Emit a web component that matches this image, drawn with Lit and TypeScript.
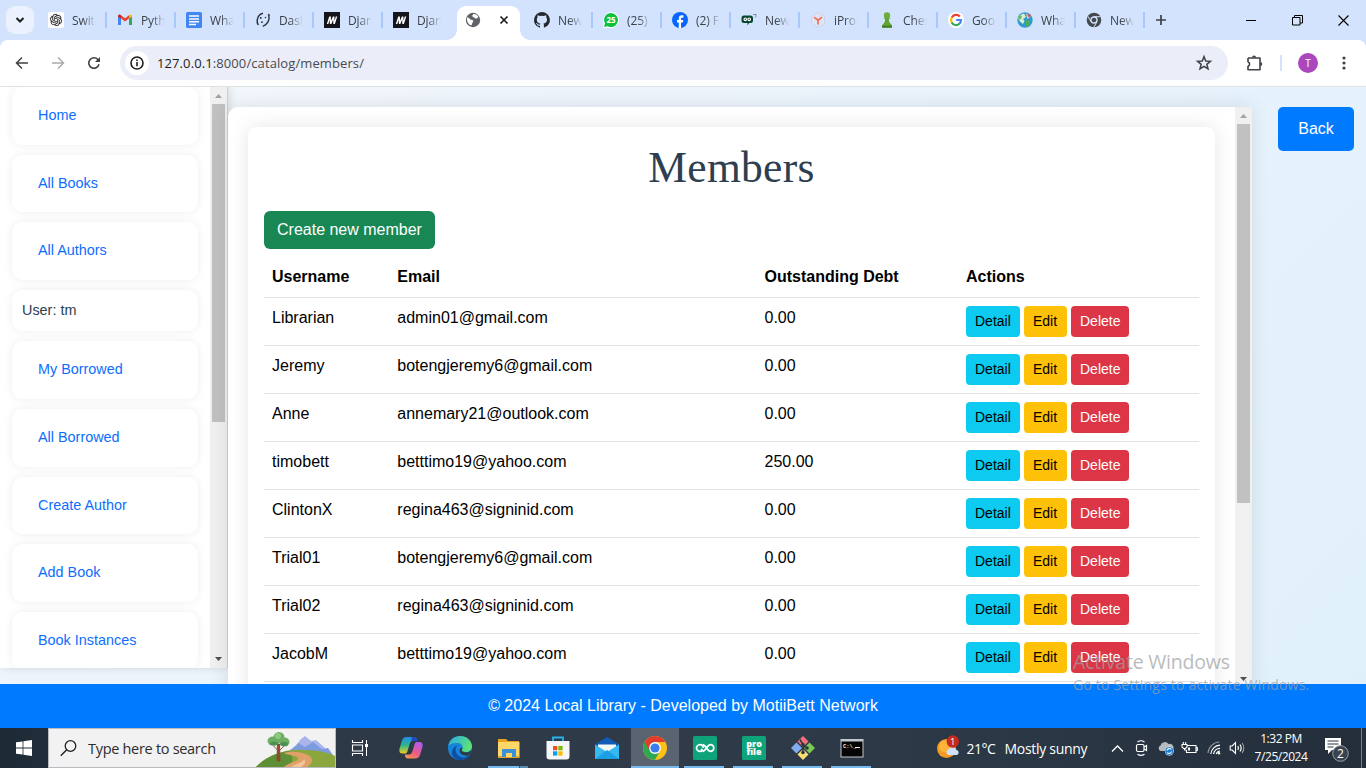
import { LitElement, html, css, svg } from "lit";
import { customElement } from "lit/decorators.js";

const icon = (w: number, h: number, body: unknown, vb = `0 0 ${w} ${h}`) =>
  html`<svg width=${w} height=${h} viewBox=${vb} fill="none">${body}</svg>`;

/* ---------- tab favicons, 16x16 ---------- */
const fav: Record<string, unknown> = {
  gpt: svg`<rect width="16" height="16" rx="2" fill="#fff"/>
    <path transform="translate(2 2) scale(.5)" fill="#222" stroke="#222" stroke-width=".3" d="M22.2819 9.8211a5.9847 5.9847 0 0 0-.5157-4.9108 6.0462 6.0462 0 0 0-6.5098-2.9A6.0651 6.0651 0 0 0 4.9807 4.1818a5.9847 5.9847 0 0 0-3.9977 2.9 6.0462 6.0462 0 0 0 .7427 7.0966 5.98 5.98 0 0 0 .511 4.9107 6.051 6.051 0 0 0 6.5146 2.9001A5.9847 5.9847 0 0 0 13.2599 24a6.0557 6.0557 0 0 0 5.7718-4.2058 5.9894 5.9894 0 0 0 3.9977-2.9001 6.0557 6.0557 0 0 0-.7475-7.0729zm-9.022 12.6081a4.4755 4.4755 0 0 1-2.8764-1.0408l.1419-.0804 4.7783-2.7582a.7948.7948 0 0 0 .3927-.6813v-6.7369l2.02 1.1686a.071.071 0 0 1 .038.052v5.5826a4.504 4.504 0 0 1-4.4945 4.4944zm-9.6607-4.1254a4.4708 4.4708 0 0 1-.5346-3.0137l.142.0852 4.783 2.7582a.7712.7712 0 0 0 .7806 0l5.8428-3.3685v2.3324a.0804.0804 0 0 1-.0332.0615L9.74 19.9502a4.4992 4.4992 0 0 1-6.1408-1.6464zM2.3408 7.8956a4.485 4.485 0 0 1 2.3655-1.9728V11.6a.7664.7664 0 0 0 .3879.6765l5.8144 3.3543-2.0201 1.1685a.0757.0757 0 0 1-.071 0l-4.8303-2.7865A4.504 4.504 0 0 1 2.3408 7.872zm16.5963 3.8558L13.1038 8.364 15.1192 7.2a.0757.0757 0 0 1 .071 0l4.8303 2.7913a4.4944 4.4944 0 0 1-.6765 8.1042v-5.6772a.79.79 0 0 0-.407-.667zm2.0107-3.0231l-.142-.0852-4.7735-2.7818a.7759.7759 0 0 0-.7854 0L9.409 9.2297V6.8974a.0662.0662 0 0 1 .0284-.0615l4.8303-2.7866a4.4992 4.4992 0 0 1 6.6802 4.66zM8.3065 12.863l-2.02-1.1638a.0804.0804 0 0 1-.038-.0567V6.0742a4.4992 4.4992 0 0 1 7.3757-3.4537l-.142.0805L8.704 5.459a.7948.7948 0 0 0-.3927.6813zm1.0976-2.3654l2.602-1.4998 2.6069 1.4998v2.9994l-2.5974 1.4997-2.6067-1.4997Z"/>`,
  gmail: svg`<path d="M1 13V4l3 2.300V13z" fill="#4285f4"/><path d="M15 13V4l-3 2.300V13z" fill="#34a853"/>
    <path d="M4 6.400V3.300l4 3 4-3v3.200L8 9.600z" fill="#ea4335"/><path d="M1 4.200c0-1.700 1.700-2.200 3-1v3.400L1 4.800z" fill="#c5221f"/>
    <path d="M15 4.200c0-1.700-1.700-2.200-3-1v3.400l3-1.800z" fill="#fbbc04"/>`,
  docs: svg`<rect width="16" height="16" rx="1.500" fill="#4285f4"/><path d="M3 4h10M3 7h10M3 9.800h10M3 12.500h7" stroke="#fff" stroke-width="1.600"/>`,
  dash: svg`<path d="M8 1.200C4 2 1.200 6 2.500 11.500M13.800 3c1.200 5-1.300 9.500-6 11.300" stroke="#2b2f36" stroke-width="1.400"/>
    <path d="M1.500 10.500l1.200 3 1.600-1.500M15 4l-1-2.500-1.500 1.500" fill="#2b2f36"/><circle cx="5.800" cy="6" r=".9" fill="#2b2f36"/><circle cx="10.500" cy="5.500" r=".8" fill="#2b2f36"/><circle cx="7" cy="10.200" r=".9" fill="#2b2f36"/>`,
  mdn: svg`<rect width="16" height="16" fill="#15141a"/><path d="M2.800 12L5.200 4.500h1.700L7 8.800l1.900-4.300h1.500l.1 4.300 1.300-4.300h1.500L10.900 12H9.300L9.200 7.700 7.300 12H5.900L5.700 7.700 4.300 12z" fill="#fff"/>`,
  globe: svg`<circle cx="8" cy="8" r="7.200" fill="#5f6368"/><path d="M2.200 5.200C4 5.500 4.600 7.600 7 8c1.500.3 1.800 1.400.8 2.300-1 .9-.5 2.500-1.400 3C3.500 12.800 1.200 9 2.200 5.200zM8.500 2c2-.2 4 .8 4.900 3-1.300.4-1.200 1.800-2.700 1.600C9.400 6.400 8.800 5 7.500 4.600c-.8-.6.2-1.800 1-2.600z" fill="#fff"/>`,
  github: svg`<path fill="#24292f" d="M8 0a8 8 0 0 0-2.500 15.600c.4 0 .5-.2.5-.4v-1.500c-2 .5-2.600-.5-2.800-1-.1-.2-.5-1-.9-1.200-.3-.1-.7-.5 0-.5s1.100.6 1.300.8c.7 1.200 1.900.9 2.400.7 0-.5.300-.9.500-1.100-1.800-.2-3.700-.9-3.700-4 0-.9.300-1.600.8-2.100 0-.2-.3-1 .1-2.100 0 0 .7-.2 2.200.8a7.500 7.500 0 0 1 4 0c1.500-1 2.200-.8 2.200-.8.4 1.100.1 1.900.1 2.100.5.600.8 1.300.8 2.100 0 3.100-1.900 3.800-3.700 4 .300.200.6.700.6 1.500v2.300c0 .2.100.5.500.4A8 8 0 0 0 8 0z"/>`,
  wa: svg`<path d="M8 0a8 8 0 0 1 0 16H1l-1 .5.500-2.500V8A8 8 0 0 1 8 0z" fill="#fff"/><path d="M8 1a7 7 0 1 1-3.300 13.200L1 15l1-3.500A7 7 0 0 1 8 1z" fill="#0fc03f"/>
    <text x="8" y="11" text-anchor="middle" font-family="Open Sans" font-weight="700" font-size="8" fill="#fff">25</text>`,
  fb: svg`<circle cx="8" cy="8" r="8" fill="#0866ff"/><path d="M6.800 16v-5.500H5V8h1.800V6.700c0-2.400 1.200-3.400 3-3.400.8 0 1.300.1 1.600.2v2.200h-1.200c-.9 0-1.200.5-1.200 1.300v1h2.300l-.4 2.500H9v5.500z" fill="#fff"/>`,
  up: svg`<path d="M3 2h6.500a2.500 2.500 0 0 1 2.500 2.500v2.500a2.500 2.500 0 0 1-2.500 2.500H8L6.500 12V9.500H3A2.500 2.500 0 0 1 .5 7V4.500A2.500 2.500 0 0 1 3 2z" transform="translate(0 1.500)" fill="#07452f"/><circle cx="4.300" cy="7.300" r="1.300" stroke="#fff" stroke-width="1.100"/><circle cx="8.200" cy="7.300" r="1.300" stroke="#fff" stroke-width="1.100"/><path d="M12 2.500h3.500M14.800 2.500v3" stroke="#5d8a83" stroke-width=".8"/>`,
  ipro: svg`<path d="M8 .6l6.500 3.700v7.400L8 15.400l-6.500-3.700V4.300z" fill="#dfe5f8" stroke="#ccd3ea"/><path d="M4 5.200l4 3 4-3M8 8v4.500" stroke="#f26b4e" stroke-width="1.600"/>`,
  pawn: svg`<circle cx="8" cy="3.500" r="3.200" fill="#6bae3c"/><path d="M4.500 6h7l-1.700 1.300c.2 2.700 1 4 3.200 6v2.200H3v-2.200c2.200-2 3-3.300 3.200-6z" fill="#5fa434"/><path d="M3 13.700h10v2H3z" fill="#3f7d25"/>`,
  google: svg`<circle cx="8" cy="8" r="8" fill="#fff"/><g stroke-width="2.200"><path d="M11.900 4.600A5 5 0 0 0 3.700 5.600" stroke="#ea4335"/><path d="M3.700 5.500a5 5 0 0 0 0 5" stroke="#fbbc05"/><path d="M3.600 10.400a5 5 0 0 0 7.800 1.300" stroke="#34a853"/><path d="M11.200 11.800A5 5 0 0 0 13 8H8.200" stroke="#4285f4"/></g>`,
  earth: svg`<circle cx="8" cy="8" r="7.700" fill="#2f9ad0"/><path d="M1 6c2-3 4-4 6-4.500L9 5 6 7l1.500 2L6 12l-3-2.500z" fill="#d9efd0"/><path d="M9 8l4 1-1 4-3 1.500z" fill="#4fae51"/><path d="M2 3l3 1-1 3-3 1z" fill="#6bb86a"/><path d="M9 1.500l5 2.500-3.500 3z" fill="#eef5fb" stroke="#8797a8" stroke-width=".6"/><circle cx="12" cy="3.500" r="1.500" fill="#e0534c"/>`,
  chrome: svg`<circle cx="8" cy="8" r="7.300" fill="#46494d"/><circle cx="8" cy="8" r="3" fill="#46494d" stroke="#d3e3fd" stroke-width="1.300"/><path d="M8 4.700h6.600M5 9.700L1.900 4.200M11 9.700l-3.200 5.500" stroke="#d3e3fd" stroke-width="1"/>`,
};

const TABS: [string, string][] = [
  ["gpt", "Switch"], ["gmail", "Python"], ["docs", "What is"], ["dash", "Dashb"], ["mdn", "Djang"], ["mdn", "Djang"],
  ["globe", ""],
  ["github", "New r"], ["wa", "(25) W"], ["fb", "(2) Fac"], ["up", "New m"], ["ipro", "iProxy"], ["pawn", "Chess"], ["google", "Goog"], ["earth", "What"], ["chrome", "New T"],
];

const MENU = ["Home", "All Books", "All Authors", "User: tm", "My Borrowed", "All Borrowed", "Create Author", "Add Book", "Book Instances"];

const MEMBERS: [string, string, string][] = [
  ["Librarian", "admin01@gmail.com", "0.00"],
  ["Jeremy", "botengjeremy6@gmail.com", "0.00"],
  ["Anne", "annemary21@outlook.com", "0.00"],
  ["timobett", "betttimo19@yahoo.com", "250.00"],
  ["ClintonX", "regina463@signinid.com", "0.00"],
  ["Trial01", "botengjeremy6@gmail.com", "0.00"],
  ["Trial02", "regina463@signinid.com", "0.00"],
  ["JacobM", "betttimo19@yahoo.com", "0.00"],
];

/* ---------- browser chrome ---------- */
@customElement("browser-bar")
class BrowserBar extends LitElement {
  static styles = css`
    :host { display: block; font-family: "Open Sans", sans-serif; }
    svg { display: block; flex: none; overflow: visible; }
    .strip { height: 40px; background: #d3e3fd; display: flex; align-items: stretch; }
    .menu { width: 28px; height: 28px; margin: 6px 4px 0 6px; border-radius: 9px; background: #ebf2fe; display: grid; place-items: center; flex: none; }
    .tab { width: 69px; flex: none; box-sizing: border-box; padding-left: 10px; display: flex; align-items: center; position: relative; }
    .tab.sep::after { content: ""; width: 2px; height: 16px; background: #a8c7fa; margin-left: auto; flex: none; }
    .label { width: 24px; margin-left: 8px; font-size: 12px; letter-spacing: -.1px; overflow: hidden; white-space: nowrap; color: #3c4148;
      -webkit-mask-image: linear-gradient(90deg, #000 45%, transparent); mask-image: linear-gradient(90deg, #000 45%, transparent); }
    .active { width: 63px; margin: 6px 4px 0 5px; height: 34px; background: #fff; border-radius: 9px 9px 0 0; flex: none; display: flex; box-sizing: border-box; padding: 6px 12px 0 8px; justify-content: space-between; position: relative; }
    .active::before, .active::after { content: ""; position: absolute; bottom: 0; width: 10px; height: 10px; }
    .active::before { right: 100%; background: radial-gradient(circle at 0 0, transparent 9.500px, #fff 10px); }
    .active::after { left: 100%; background: radial-gradient(circle at 100% 0, transparent 9.500px, #fff 10px); }
    .plus { margin: 14px 0 0 10px; }
    .win { margin-left: auto; display: flex; }
    .win div { width: 46px; display: grid; place-items: center; }
    .corner { background: #d3e3fd; }
    .bar { height: 46px; background: #fff; border-radius: 8px 8px 0 0; display: flex; align-items: center; border-bottom: 1px solid #dfe2e2; }
    .nav { width: 36px; display: grid; place-items: center; }
    .navs { display: flex; padding-left: 4px; width: 116px; }
    .omni { flex: none; width: 1108px; height: 34px; border-radius: 17px; background: #ebeef8; display: flex; align-items: center; box-sizing: border-box; padding: 0 16px 0 5px; }
    .info { width: 24px; height: 24px; border-radius: 50%; background: #fff; display: grid; place-items: center; margin-right: 8px; }
    .url { flex: 1; font-size: 13px; color: #474b50; letter-spacing: .1px; }
    .url b { font-weight: 400; color: #1f2023; }
    .ext { margin-left: 18px; }
    .div { width: 2px; height: 16px; background: #d3e3fd; margin: 0 16px 0 17px; }
    .me { width: 20px; height: 20px; border-radius: 50%; background: #ab47bc; color: #fff; font-size: 10px; line-height: 20px; text-align: center; margin-right: 24px; }
  `;
  render() {
    return html`
      <div class="strip">
        <div class="menu">${icon(10, 6, svg`<path d="M1.500 1l3.500 3.500L8.500 1" stroke="#1f1f1f" stroke-width="2"/>`)}</div>
        ${TABS.map(([f, t], i) => f === "globe"
          ? html`<div class="active">${icon(16, 16, fav[f])}${icon(8, 16, svg`<path d="M.5 4.500l7 7M7.500 4.500l-7 7" stroke="#1f1f1f" stroke-width="1.700"/>`)}</div>`
          : html`<div class="tab ${i !== 5 ? "sep" : ""}">${icon(16, 16, fav[f])}<span class="label">${t}</span></div>`)}
        <div class="plus">${icon(12, 12, svg`<path d="M6 1v10M1 6h10" stroke="#3c4043" stroke-width="1.700"/>`)}</div>
        <div class="win">
          <div>${icon(11, 11, svg`<path d="M0 5.500h10" stroke="#000"/>`)}</div>
          <div>${icon(11, 11, svg`<path d="M.5 2.500h7.500v7.500H.5zM2.500 2.500v-2h8v7.500H8" stroke="#000"/>`)}</div>
          <div>${icon(11, 11, svg`<path d="M.5.5l10 10M10.500.5l-10 10" stroke="#000" stroke-width="1.100"/>`)}</div>
        </div>
      </div>
      <div class="corner"><div class="bar">
        <div class="navs">
          <div class="nav">${icon(16, 16, svg`<path d="M14 8H3M8 2.500L2.500 8 8 13.500" stroke="#3f4246" stroke-width="1.500"/>`)}</div>
          <div class="nav">${icon(16, 16, svg`<path d="M2 8h11M8 2.500L13.500 8 8 13.500" stroke="#ababab" stroke-width="1.500"/>`)}</div>
          <div class="nav">${icon(16, 16, svg`<path d="M13 9.300A5.200 5.200 0 1 1 11.800 4.500L13 5.700" stroke="#3f4246" stroke-width="1.600"/><path d="M14 2v5H9z" fill="#3f4246"/>`)}</div>
        </div>
        <div class="omni">
          <div class="info">${icon(14, 14, svg`<circle cx="7" cy="7" r="6" stroke="#202124" stroke-width="1.600"/><path d="M7 6v4.300M7 3.600v1.500" stroke="#202124" stroke-width="1.600"/>`)}</div>
          <div class="url"><b>127.0.0.1</b>:8000/catalog/members/</div>
          ${icon(16, 16, svg`<path d="M8 1.600l1.700 4.400 4.700.3-3.600 3 1.200 4.600L8 11.300l-4 2.600 1.200-4.600-3.600-3 4.700-.3z" stroke="#3f4246" stroke-width="1.500"/>`)}
        </div>
        <div class="ext">${icon(17, 17, svg`<path d="M2 3h12v4.200M14 10.500v4.200H2v-3.200a2.600 2.600 0 0 0 0-4.800V3M14 7v4" stroke="#3f4246" stroke-width="1.600" stroke-linejoin="round"/><path d="M6 2.500a2 2 0 0 1 4 0zM14.300 7a2 2 0 0 1 0 4z" fill="#3f4246"/>`)}</div>
        <div class="div"></div>
        <div class="me">T</div>
        ${icon(4, 16, svg`<g fill="#3f4246"><circle cx="2" cy="3" r="1.600"/><circle cx="2" cy="8" r="1.600"/><circle cx="2" cy="13" r="1.600"/></g>`)}
      </div></div>`;
  }
}

/* ---------- classic scrollbar ---------- */
@customElement("scroll-rail")
class ScrollRail extends LitElement {
  static properties = { thumb: { type: Number } };
  declare thumb: number;
  static styles = css`
    :host { width: 17px; flex: none; background: #f0f0f0; display: flex; flex-direction: column; align-items: center; }
    svg { display: block; flex: none; }
    .thumb { width: 13px; background: #c1c1c1; }
    .space { flex: 1; }
  `;
  render() {
    return html`${icon(17, 17, svg`<path d="M5 11l3.500-4L12 11z" fill="#a3a3a3"/>`)}
      <div class="thumb" style="height:${this.thumb}px"></div><div class="space"></div>
      ${icon(17, 17, svg`<path d="M5 6h7l-3.500 4z" fill="#505050"/>`)}`;
  }
}

/* ---------- library page ---------- */
@customElement("library-page")
class LibraryPage extends LitElement {
  static styles = css`
    * { box-sizing: border-box; }
    :host { display: flex; flex-direction: column; height: 641px; font-family: "Liberation Sans", Arial, sans-serif; font-size: 16px; line-height: 24px; color: #000; overflow: hidden;
      background: linear-gradient(135deg, #f5f9fc 0%, #eef4fc 30%, #e8f3fc 55%, #e0f0fb 100%); }
    .body { display: flex; height: 597px; overflow: hidden; }
    .side { width: 228px; height: 581px; background: #fff; display: flex; overflow: hidden; flex: none; border-right: 1px solid #cdcfd1; box-shadow: 2px 0 8px rgba(0,0,0,.12); }
    .list { width: 210px; height: 581px; overflow: hidden; padding: .2px 12px 0; display: flex; flex-direction: column; gap: 10px; }
    .item { flex: none; height: 57.620px; border-radius: 10px; background: #fff; box-shadow: 0 0 10px rgba(0,0,0,.07); padding: 17px 26px 0; font-size: 14.400px; line-height: 23px; color: #0d6efd; }
    .item.user { height: 41.400px; padding: 9px 10px; color: #2c3e50; }
    .main { width: 1024px; height: 620px; margin-top: 20px; background: #fff; border-radius: 10px 0 0 0; display: flex; box-shadow: 0 0 20px rgba(0,0,0,.1); flex: none; position: relative; }
    .scroll { flex: 1; overflow: hidden; padding: 20px 20px 0; border-radius: 10px 0 0 0; }
    .card { height: 620px; background: #fff; border-radius: 8px; box-shadow: 0 0 20px rgba(0,0,0,.1); padding: 16px; }
    scroll-rail { position: relative; }
    scroll-rail.m { height: 581px; }
    h1 { margin: 0 0 19px; font: 400 43.500px/49px "Liberation Serif", serif; letter-spacing: .3px; text-align: center; color: #2c3e50; }
    .create { display: inline-block; height: 38px; border-radius: 6px; background: #198754; color: #fff; padding: 7px 13px; }
    .row { display: grid; grid-template-columns: 125.300px 367.200px 201.500px 1fr; height: 48px; border-bottom: 1px solid #dee2e6; }
    .row > * { padding: 8px 8px 0; }
    .row.head { height: 41px; font-weight: 700; margin-top: 8px; }
    .acts { display: flex; gap: 4px; font-size: 14px; line-height: 21px; }
    .acts span { height: 31px; border-radius: 4px; padding: 5px 0 0 9px; }
    .acts .d { background: #0dcaf0; width: 54px; } .acts .e { background: #ffc107; width: 43px; } .acts .x { background: #dc3545; color: #fff; width: 58px; }
    .back { margin: 20px 0 0 26px; width: 76px; height: 44px; border-radius: 5px; background: #007bff; color: #fff; text-align: center; line-height: 43px; }
    footer { height: 44px; background: #007bff; color: #fff; text-align: center; line-height: 43px; position: relative; }
  `;
  render() {
    return html`
      <div class="body">
        <nav class="side"><div class="list">${MENU.map(m => html`<div class="item ${m.startsWith("User") ? "user" : ""}">${m}</div>`)}</div><scroll-rail .thumb=${318}></scroll-rail></nav>
        <section class="main">
          <div class="scroll"><div class="card">
            <h1>Members</h1>
            <div class="create">Create new member</div>
            <div class="row head"><div>Username</div><div>Email</div><div>Outstanding Debt</div><div>Actions</div></div>
            ${MEMBERS.map(([u, e, d]) => html`<div class="row"><div>${u}</div><div>${e}</div><div>${d}</div>
              <div class="acts"><span class="d">Detail</span><span class="e">Edit</span><span class="x">Delete</span></div></div>`)}
          </div></div>
          <scroll-rail class="m" .thumb=${379}></scroll-rail>
        </section>
        <div class="back">Back</div>
      </div>
      <footer>© 2024 Local Library - Developed by MotiiBett Network</footer>`;
  }
}

/* ---------- windows taskbar ---------- */
const APPS: { art: unknown; on?: string }[] = [
  { art: svg`<defs>
      <linearGradient id="ca" x1="0" y1="0" x2="0" y2="1"><stop stop-color="#1f8df0"/><stop offset=".5" stop-color="#2fb58a"/><stop offset="1" stop-color="#f0cf1c"/></linearGradient>
      <linearGradient id="cb" x1="0" y1="1" x2=".6" y2="0"><stop stop-color="#f9a04b"/><stop offset=".5" stop-color="#ee5b80"/><stop offset="1" stop-color="#b45ce6"/></linearGradient></defs>
    <path d="M8 1h7c2 0 2.500 1 3.300 4H14c-2 0-2.700 1-3.300 3L8.500 15c-.6 2-1.300 2.500-3 2.500h-2C.8 17.500-.2 15.500.6 12.500L3 4.500C3.800 2 5.500 1 8 1z" fill="url(#ca)"/>
    <path d="M13 1h2c2 0 2.500 1 3.300 4H14c-1 0-1.600.2-2.100.7z" fill="#2348c0"/>
    <path d="M16 22.500H9c-2 0-2.500-1-3.300-4H10c2 0 2.700-1 3.300-3l2.200-7c.6-2 1.300-2.500 3-2.500h2c2.700 0 3.700 2 2.900 5L21 19c-.8 2.500-2.500 3.500-5 3.500z" fill="url(#cb)"/>` },
  { art: svg`<defs><linearGradient id="eg" x1="0" y1="0" x2="1" y2=".4"><stop stop-color="#2aa9e8"/><stop offset="1" stop-color="#5be07a"/></linearGradient></defs><circle cx="12" cy="12" r="12" fill="#1684d8"/><path d="M.3 10C1.500 3.500 6.500 0 12 0c7 0 12 5 12 10.500 0 3.500-3 5.500-6 5.500s-4.500-1-4.200-2C15.500 12 15 7.500 10 7 5.500 6.500 1.500 8 .3 10z" fill="url(#eg)"/><path d="M10 9c-4 3-3 10 3 12 3 1 6.500 0 9-3-2 4.500-8 7.300-13 5.500C2 21 2 12 10 9z" fill="#0c4fa3"/><path d="M13.800 14c-.5 1.500 2 2.500 5 2.200 2-.2 4-1.200 5-2.800-.5 2.500-1 4-1.800 5-1.500 1-3.500 1.500-5.200 1.200-3-.3-5-2-5.200-4.500S13 11 14.500 12z" fill="#2e3c4a"/>` },
  { on: "split", art: svg`<path d="M1 3h8l2 2h11v17H1z" fill="#e9a21b"/><path d="M1 6h21.500v15H1z" fill="#fdd768"/><path d="M5 21v-8h14v8h-4v-4H9v4z" fill="#3d8fd6"/><path d="M1 20h4v2H1zM19 20h3.500v2H19z" fill="#dda632"/>` },
  { art: svg`<path d="M7 6V1.500h10V6" stroke="#25b5ec" stroke-width="1.800"/><path d="M.5 5h23v15.500a3 3 0 0 1-3 3h-17a3 3 0 0 1-3-3z" fill="#f5f6f7"/><path d="M7 10h4.300v4.300H7z" fill="#f25022"/><path d="M12.300 10h4.300v4.300h-4.300z" fill="#7fba00"/><path d="M7 15.300h4.300v4.300H7z" fill="#00a4ef"/><path d="M12.300 15.300h4.300v4.300h-4.300z" fill="#ffb900"/>` },
  { art: svg`<path d="M0 8.500L12 1l12 7.500V23H0z" fill="#0f5db8"/><path d="M3 8.500h18v8H3z" fill="#f4f6f8"/><path d="M0 8.500L12 16l12-7.500V23H0z" fill="#36b8f3"/><path d="M0 23l12-9 12 9z" fill="#1ba0e6"/>` },
  { on: "active", art: svg`<circle cx="12" cy="12" r="12" fill="#fbc116"/><path d="M1.600 6A12 12 0 0 0 11.800 24L17 15l-5-3V6L8 4z" fill="#2da94f"/><path d="M1.600 6A12 12 0 0 1 22.400 6H12a6 6 0 0 0-5.200 9z" fill="#e33b2e"/><circle cx="12" cy="12" r="5.900" fill="#fff"/><circle cx="12" cy="12" r="4.600" fill="#3a7cec"/>` },
  { on: "run", art: svg`<rect width="24" height="24" rx="1.500" fill="#0fa37c"/><path d="M10.300 12a3.400 3.400 0 1 0-1 2.400M8 13l2.500 2.300M9.500 8.700c3.500 0 4.500 6.600 8 6.600a3.300 3.300 0 0 0 0-6.600c-3.500 0-4.500 6.600-8 6.600" stroke="#fff" stroke-width="1.700"/>` },
  { on: "run", art: svg`<rect width="24" height="24" rx="1.500" fill="#0fa37c"/><g font-family="Open Sans" font-weight="800" font-size="9" fill="#fff" text-anchor="middle"><text x="12" y="10.500">pro</text><text x="12" y="18.500">file</text></g>` },
  { on: "run", art: svg`<path d="M12 0l5.500 5.500-5.500 5.500-5.500-5.500z" fill="#f4717b"/><path d="M5.500 6.500l5.500 5.500-5.500 5.500L0 12z" fill="#82acf0"/><path d="M18.500 6.500L24 12l-5.500 5.500L13 12z" fill="#7ccb55"/><path d="M12 13l5.500 5.500L12 24l-5.500-5.500z" fill="#f8e072"/><path d="M9 3.500l3 5v9M12 9l4 3" stroke="#2d3640" stroke-width="1.500"/><g fill="#2d3640"><circle cx="12" cy="8.500" r="1.700"/><circle cx="12" cy="16.500" r="1.800"/><circle cx="16" cy="12" r="1.800"/></g>` },
  { on: "run", art: svg`<rect x=".5" y="3" width="23" height="18.500" fill="#c3c8cc"/><rect x="1.500" y="5.500" width="21" height="15" fill="#050505"/><text x="3" y="12" font-family="Liberation Mono" font-weight="700" font-size="5.500" fill="#eee">C:\\_</text><path d="M15 11.500h5" stroke="#eee"/>` },
];

@customElement("task-bar")
class TaskBar extends LitElement {
  static styles = css`
    * { box-sizing: border-box; }
    :host { height: 40px; display: flex; font-family: "Open Sans", sans-serif; color: #fff; background: linear-gradient(90deg, #1d2b37 0, #2c3846 20%, #2f3b49 50%, #2a3745 75%, #242e3b 100%); }
    svg { display: block; flex: none; overflow: visible; }
    .start { width: 48px; display: grid; place-items: center; }
    .search { width: 288px; background: #f2f2f2; border: 1px solid #b9bcc0; display: flex; align-items: center; padding-left: 11px; color: #2d2d2d; font-size: 14.500px; overflow: hidden; }
    .search span { margin-left: 11px; width: 149px; white-space: nowrap; letter-spacing: -.3px; flex: none; }
    .search .pic { margin-left: 18px; align-self: flex-end; }
    .app { width: 49px; display: grid; place-items: center; position: relative; flex: none; }
    .view { width: 48px; margin-right: 2px; }
    .run::after, .split::after, .active::after { content: ""; position: absolute; bottom: 0; left: 4px; width: 40px; height: 2px; background: #76b9ed; }
    .split::after { background: linear-gradient(90deg, #76b9ed 31px, #3b4c5c 31px 32px, #5a8ab1 32px); }
    .active { background: #596470; width: 48px; margin-right: 1px; } .active::after { left: 0; width: 48px; }
    .tray { margin-left: auto; display: flex; align-items: center; font-size: 14px; white-space: nowrap; }
    .temp { width: 38px; margin-left: 6px; letter-spacing: -.5px; }
    .sky { width: 101px; letter-spacing: -.3px; }
    .clock { width: 63px; margin-right: 3.500px; text-align: center; font-size: 12px; line-height: 18px; letter-spacing: -.45px; }
    .slot { width: 24px; display: grid; place-items: center; }
    .desk { width: 1px; height: 40px; background: #74808b; margin: 0 4px 0 10px; }
  `;
  render() {
    return html`
      <div class="start">${icon(16, 16, svg`<path d="M0 2.300L6.600 1.400v6.200H0zM7.400 1.300L16 0v7.600H7.400zM0 8.400h6.600v6.200L0 13.700zM7.400 8.400H16V16l-8.600-1.300z" fill="#fff"/>`)}</div>
      <div class="search">${icon(17, 17, svg`<circle cx="10.500" cy="6" r="5.300" stroke="#222" stroke-width="1.300"/><path d="M6.700 9.800L.8 15.800" stroke="#222" stroke-width="1.400"/>`)}
        <span>Type here to search</span>
        <div class="pic">${icon(80, 36, svg`
          <path d="M38 18L46 8l4-3 6 5 5-1 8 7 8 10H38z" fill="#aab5ec"/><path d="M34 20l10-8 6 4 8-5 9 7 6-1 7 10H34z" fill="#7f9be0"/>
          <path d="M0 37c10-11 28-20 50-18 14 0 24 3 30 6v12z" fill="#8aa63d"/><path d="M0 37c8-9 20-15 34-17 6 8 4 12-4 17z" fill="#5e8f36"/>
          <path d="M28 37c5-6 16-6 15-10-1-3-12-3-14-5 8-3 28 0 28 7 0 4-4 6-6 8z" fill="#e0a069"/><path d="M35 37c4-4 13-5 14-9 3 3 0 6-4 9z" fill="#f3c396"/>
          <path d="M22.500 13h2l.5 17h-3zM23.500 20l-5-5M24 20l5-5" fill="#8a4b2f" stroke="#8a4b2f"/>
          <g fill="#6eae63"><ellipse cx="18" cy="10" rx="5.500" ry="4.500"/><circle cx="24" cy="6.500" r="5.500"/><ellipse cx="29.500" cy="11" rx="5" ry="4.500"/></g><g fill="#4a9152"><ellipse cx="19" cy="12.500" rx="4" ry="2"/><ellipse cx="29" cy="13" rx="4" ry="2"/></g><circle cx="23" cy="5" r="3" fill="#8fc97f"/>`)}</div></div>
      <div class="app view">${icon(16, 16, svg`<path d="M.5 0v2.500h10V0M.5 16v-2.500h10V16M.5 5h10v6H.5z" stroke="#fff" stroke-width="1.100"/><path d="M14.500 0v16" stroke="#fff"/><path d="M13 4h3v3h-3z" fill="#fff"/>`)}</div>
      ${APPS.map(a => html`<div class="app ${a.on ?? ""}">${icon(24, 24, a.art)}</div>`)}
      <div class="tray">
        ${icon(24, 24, svg`<circle cx="9.500" cy="12.500" r="9.500" fill="#f59a23"/><circle cx="8" cy="10.500" r="6" fill="#fbb338"/><path d="M11 19a3.300 3.300 0 0 1 1-6 4.200 4.200 0 0 1 7.500 1A2.600 2.600 0 0 1 20 19z" fill="#cfe0f8"/><circle cx="15.800" cy="5.500" r="6.200" fill="#c42b1c"/><text x="15.800" y="9" text-anchor="middle" font-size="9.500" font-family="Open Sans" fill="#fff">1</text>`)}
        <div class="temp">21°C</div><div class="sky">Mostly sunny</div>
        <div class="slot">${icon(12, 7, svg`<path d="M0 6.500L5.500 1 11 6.500" stroke="#fff" stroke-width="1.300"/>`)}</div>
        <div class="slot">${icon(14, 16, svg`<rect x="1.500" y="4.500" width="7.500" height="7" rx="1.500" stroke="#fff" stroke-width="1.200"/><path d="M9 7l2.500-1.500v5L9 9M2.500 2Q6-.5 9.500 2M2.500 14.200q3.500 2.300 7 0" stroke="#fff" stroke-width="1.200"/>`)}</div>
        <div class="slot">${icon(16, 14, svg`<path d="M2.500 10a3 3 0 0 1 0-5.500A4.500 4.500 0 0 1 10.500 3 3.500 3.500 0 0 1 13 10z" fill="#b7babd"/><circle cx="11.300" cy="10" r="4.500" fill="#fff"/><circle cx="11.300" cy="10" r="4.100" fill="#1c7dd1"/><path d="M9 9.500a2.500 2.500 0 0 1 4.400-1M13.600 10.500a2.500 2.500 0 0 1-4.400 1" stroke="#fff" stroke-width="1.100"/>`)}</div>
        <div class="slot">${icon(17, 14, svg`<path d="M6.500 4.500H15v7H5.500V9M15 6.500h1.300v3H15M1 3.500h5V6L4.500 7.500h-2L1 6zM2.300 1v2.500M4.700 1v2.500M3.500 7.500V9h2" stroke="#fff" stroke-width="1.100"/><path d="M7 6.500h2v3H7z" fill="#fff"/>`)}</div>
        <div class="slot">${icon(14, 14, svg`<g stroke-width="1.200"><path d="M1 12A12 12 0 0 1 12.500 1" stroke="#8d959d"/><path d="M3.800 13A9.500 9.500 0 0 1 13 4.200M6.600 13A6.500 6.500 0 0 1 13 7.300M9.300 13A4 4 0 0 1 13 10" stroke="#fff"/></g><circle cx="12" cy="12.300" r="1.200" fill="#fff"/>`)}</div>
        <div class="slot">${icon(16, 14, svg`<path d="M.2 5h2l3.300-3.300v10.600L2.200 9h-2z" stroke="#fff" stroke-width="1.100"/><path d="M7.800 5q1.400 2 0 4M10 3.500q2.300 3.500 0 7" stroke="#fff" stroke-width="1.200"/><path d="M12.200 2q3.200 5 0 10" stroke="#9aa1a8" stroke-width="1.100"/>`)}</div>
        <div class="clock">1:32 PM<br>7/25/2024</div>
        ${icon(35, 26, svg`<path d="M9 3h16v12H16l-4 4v-4H9z" fill="#fff"/><path d="M11.500 6h11M11.500 9h11M11.500 12h6" stroke="#2a3442" stroke-width="1.100"/><circle cx="24.500" cy="18.500" r="7.800" fill="#3a434e" stroke="#9aa0a6"/><text x="24.500" y="23" text-anchor="middle" font-size="12" font-family="Open Sans" fill="#fff">2</text>`)}
        <div class="desk"></div>
      </div>`;
  }
}

@customElement("app-root")
class AppRoot extends LitElement {
  static styles = css`
    :host { display: block; width: 1366px; height: 768px; overflow: hidden; position: relative; }
    .mark { position: absolute; left: 1073px; top: 649px; color: rgba(158,160,163,.72); font-family: "Open Sans", sans-serif; white-space: nowrap; }
    .a { font-size: 19.500px; line-height: 26px; letter-spacing: -.2px; }
    .b { font-size: 14px; line-height: 20px; letter-spacing: .2px; }
  `;
  render() {
    return html`<browser-bar></browser-bar><library-page></library-page><task-bar></task-bar>
      <div class="mark"><div class="a">Activate Windows</div><div class="b">Go to Settings to activate Windows.</div></div>`;
  }
}
